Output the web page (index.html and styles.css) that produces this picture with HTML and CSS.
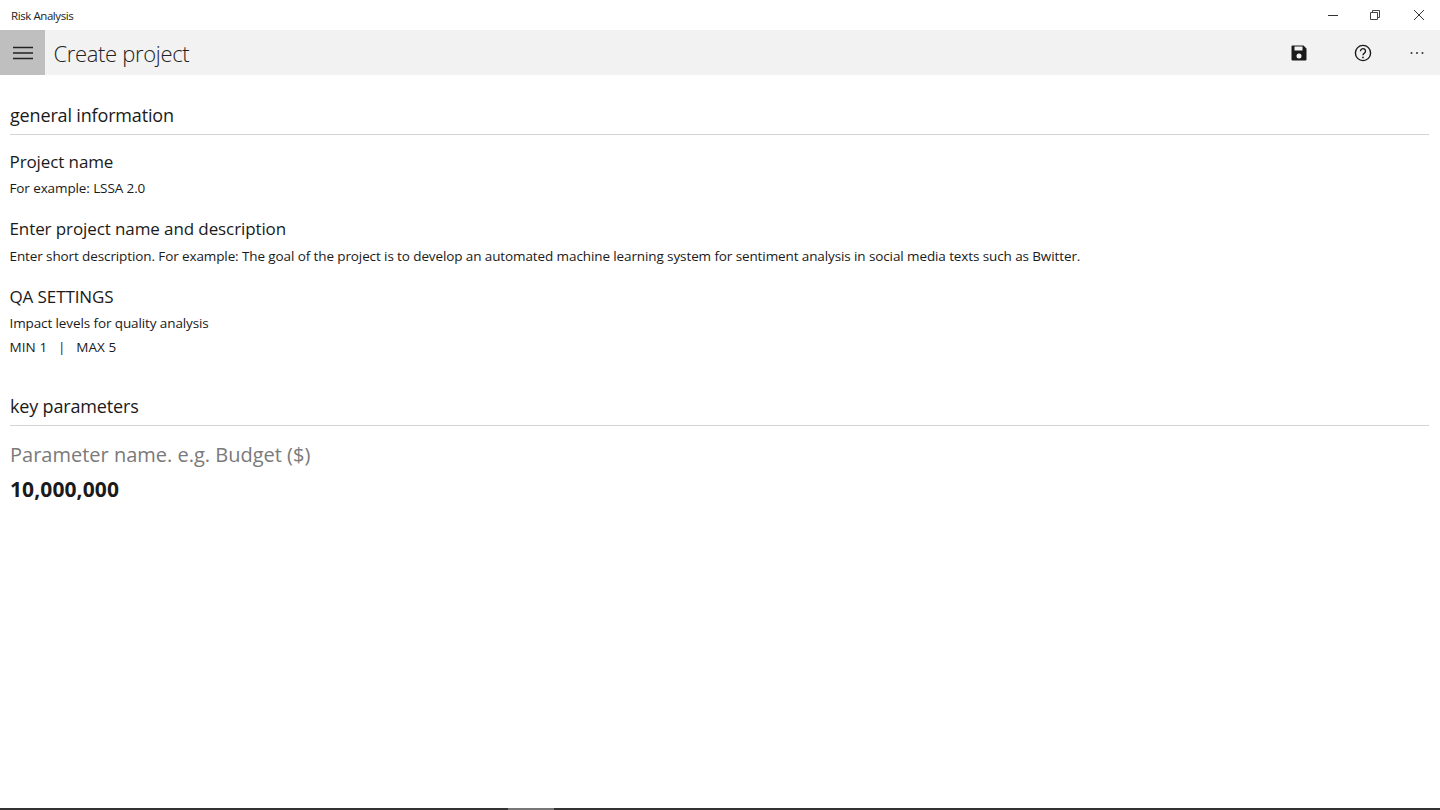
FILE: index.html
```html
<!DOCTYPE html>
<html lang="en">
<head>
<meta charset="utf-8">
<title>Risk Analysis</title>
<link rel="stylesheet" href="styles.css">
</head>
<body>
<div class="app">
  <header class="titlebar">
    <span class="app-name">Risk Analysis</span>
    <div class="window-controls">
      <span class="win-btn"><svg width="12" height="12" viewBox="0 0 12 12"><path d="M1 6.500h10" stroke="#333" fill="none"/></svg></span>
      <span class="win-btn win-restore"><svg width="12" height="12" viewBox="0 0 12 12"><path d="M1.500 3.500h7v7h-7z M3.500 3.500v-2h7v7h-2" stroke="#444" fill="none"/></svg></span>
      <span class="win-btn"><svg width="12" height="12" viewBox="0 0 12 12"><path d="M1 1l10 10M11 1L1 11" stroke="#333" fill="none"/></svg></span>
    </div>
  </header>
  <div class="commandbar">
    <button class="hamburger" aria-label="Menu"><svg width="20" height="14" viewBox="0 0 20 14"><path d="M0 1.500h20M0 7h20M0 12.500h20" stroke="#222" stroke-width="1.600" fill="none"/></svg></button>
    <h1 class="page-title">Create project</h1>
    <div class="commands">
      <span class="cmd cmd-save"><svg width="16" height="16" viewBox="0 0 16 16"><path fill-rule="evenodd" fill="#1a1a1a" d="M1.500 0.500h11l3 3v11a1 1 0 0 1-1 1h-13a1 1 0 0 1-1-1v-13a1 1 0 0 1 1-1zM3.500 1.500v4h8v-4zM8 8.500a2.500 2.500 0 1 0 0 5a2.500 2.500 0 0 0 0-5z"/></svg></span>
      <span class="cmd cmd-help"><svg width="18" height="18" viewBox="0 0 18 18"><circle cx="9" cy="9" r="7.600" stroke="#1a1a1a" stroke-width="1.400" fill="none"/><path d="M6.500 7.200a2.500 2.500 0 1 1 3.900 2c-.9.600-1.400 1-1.400 2.100" stroke="#1a1a1a" stroke-width="1.400" fill="none"/><circle cx="9" cy="13.400" r=".9" fill="#1a1a1a"/></svg></span>
      <span class="cmd cmd-more"><svg width="14" height="4" viewBox="0 0 14 4"><circle cx="1.500" cy="2" r="1" fill="#333"/><circle cx="7" cy="2" r="1" fill="#333"/><circle cx="12.500" cy="2" r="1" fill="#333"/></svg></span>
    </div>
  </div>
  <main class="content">
    <section class="general">
      <h2 class="section-title">general information</h2>
      <div class="field">
        <h3 class="field-title">Project name</h3>
        <p class="field-text">For example: LSSA 2.0</p>
      </div>
      <div class="field">
        <h3 class="field-title">Enter project name and description</h3>
        <p class="field-text">Enter short description. For example: The goal of the project is to develop an automated machine learning system for sentiment analysis in social media texts such as Bwitter.</p>
      </div>
      <div class="field">
        <h3 class="field-title">QA SETTINGS</h3>
        <p class="field-text">Impact levels for quality analysis</p>
        <p class="field-text field-range">MIN 1 &nbsp;&nbsp;|&nbsp;&nbsp; MAX 5</p>
      </div>
    </section>
    <section class="params">
      <h2 class="section-title">key parameters</h2>
      <div class="param-name">Parameter name. e.g. Budget ($)</div>
      <div class="param-value">10,000,000</div>
    </section>
  </main>
  <div class="bottom-edge"><span class="bottom-thumb"></span></div>
</div>
</body>
</html>
```
FILE: styles.css
```css
* { box-sizing: border-box; }
html, body { margin: 0; height: 100%; background: #fff; overflow: hidden; }
body { font-family: "Open Sans", "Noto Sans", "Liberation Sans", sans-serif; color: #1a1a1a; }
.app { height: 810px; display: flex; flex-direction: column; }
.titlebar { height: 30px; display: flex; align-items: center; justify-content: space-between; padding-left: 11px; flex: none; }
.app-name { font-size: 11.5px; letter-spacing: -0.42px; color: #222; }
.window-controls { display: flex; }
.win-btn { width: 43px; height: 30px; display: flex; align-items: center; justify-content: center; }
.win-restore { padding-right: 1px; }
.commandbar { height: 45px; background: #f2f2f2; display: flex; align-items: center; flex: none; }
.hamburger { width: 45px; height: 45px; border: 0; padding: 0; background: #bfbfbf; display: flex; align-items: center; justify-content: center; }
.page-title { margin: 0 0 0 8.5px; font-size: 22px; font-weight: 300; letter-spacing: -0.34px; color: #222; flex: 1; }
.commands { display: flex; align-items: center; margin-right: 1px; }
.cmd { display: flex; align-items: center; justify-content: center; height: 45px; }
.cmd-save { width: 64px; }
.cmd-help { width: 64px; }
.cmd-more { width: 44px; }
.content { flex: 1; padding: 0 11px 0 10px; }
.section-title { margin: 0; font-size: 18px; font-weight: 400; line-height: 26px; letter-spacing: -0.16px; padding-bottom: 6px; border-bottom: 1px solid #d4d4d4; color: #1a1a1a; }
.general { padding-top: 27px; }
.field { margin-top: 14.5px; }
.field + .field { margin-top: 17px; }
.field-title { margin: 0; font-size: 17px; font-weight: 400; line-height: 24px; letter-spacing: -0.1px; text-indent: -0.5px; }
.field-text { margin: 2.5px 0 0; font-size: 13.5px; line-height: 24px; letter-spacing: -0.107px; text-indent: -0.5px; }
.field-range { margin-top: 0; letter-spacing: 0.08px; }
.params { margin-top: 34px; }
.param-name { margin-top: 14px; font-size: 20px; line-height: 30px; color: #7a7a7a; }
.param-value { margin-top: 4px; font-size: 21px; font-weight: 700; line-height: 30px; letter-spacing: 0.1px; color: #1a1a1a; }
.bottom-edge { height: 2px; background: #333; flex: none; display: flex; }
.bottom-thumb { width: 46px; margin-left: 508px; background: #777; }
```
